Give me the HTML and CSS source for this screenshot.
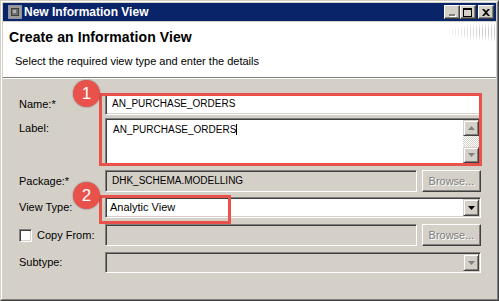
FILE: index.html
```html
<!DOCTYPE html>
<html>

<head>
    <title>New Information View</title>
    <link rel="stylesheet" href="styles.css">
</head>

<body>
    <div class="window">
        <div class="frame">
            <div class="titlebar">
                <svg class="app-icon" width="14" height="14" viewBox="0 0 14 14">
                    <rect x="0.5" y="0.5" width="13" height="13" fill="#9a9a9a" stroke="#c8c8c8" stroke-dasharray="1 1"/>
                    <rect x="3" y="3" width="8" height="8" fill="#404040"/>
                    <rect x="4" y="4" width="6" height="6" fill="#707070"/>
                    <rect x="5" y="5" width="3" height="3" fill="#b0b0b0"/>
                </svg>
                <span class="title">New Information View</span>
                <div class="caption-buttons">
                    <span class="cap-btn"><span class="glyph-min"></span></span>
                    <span class="cap-btn"><span class="glyph-max"></span></span>
                    <span class="cap-btn cap-close">
                        <svg width="8" height="7" viewBox="0 0 8 7">
                            <path d="M0 0h2l2 2 2-2h2L5 3.5 8 7H6L4 5 2 7H0l3-3.5z" fill="#000"/>
                        </svg>
                    </span>
                </div>
            </div>
            <div class="content">
                <div class="header">
                    <h1>Create an Information View</h1>
                    <p>Select the required view type and enter the details</p>
                </div>
                <div class="form">
                    <div class="row">
                        <span class="field-label">Name:*</span>
                        <div class="textbox span-2">AN_PURCHASE_ORDERS</div>
                    </div>
                    <div class="row row-tight">
                        <span class="field-label label-top">Label:</span>
                        <div class="textarea span-2">
                            <div class="textarea-text">AN_PURCHASE_ORDERS<span class="caret"></span></div>
                            <div class="scrollbar">
                                <span class="scroll-btn">
                                    <svg width="7" height="4" viewBox="0 0 7 4"><path d="M3.5 0L7 4H0z" fill="#808080"/></svg>
                                </span>
                                <span class="scroll-track"></span>
                                <span class="scroll-btn">
                                    <svg width="7" height="4" viewBox="0 0 7 4"><path d="M0 0h7L3.5 4z" fill="#808080"/></svg>
                                </span>
                            </div>
                        </div>
                    </div>
                    <div class="row">
                        <span class="field-label">Package:*</span>
                        <div class="textbox disabled">DHK_SCHEMA.MODELLING</div>
                        <span class="button">Browse...</span>
                    </div>
                    <div class="row">
                        <span class="field-label">View Type:</span>
                        <div class="combo span-2">
                            <span class="combo-text">Analytic View</span>
                            <span class="combo-btn">
                                <svg width="7" height="4" viewBox="0 0 7 4"><path d="M0 0h7L3.5 4z" fill="#000"/></svg>
                            </span>
                        </div>
                    </div>
                    <div class="row row-loose">
                        <span class="field-label check-label"><span class="checkbox"></span>Copy From:</span>
                        <div class="textbox disabled"></div>
                        <span class="button">Browse...</span>
                    </div>
                    <div class="row row-loose">
                        <span class="field-label">Subtype:</span>
                        <div class="combo disabled span-2">
                            <span class="combo-text"></span>
                            <span class="combo-btn">
                                <svg width="7" height="4" viewBox="0 0 7 4"><path d="M0 0h7L3.5 4z" fill="#808080"/></svg>
                            </span>
                        </div>
                    </div>
                </div>
            </div>
        </div>

        <div class="callout callout-1"></div>
        <div class="callout callout-2"></div>
        <span class="badge badge-1">1</span>
        <span class="badge badge-2">2</span>
    </div>
</body>

</html>
```

FILE: styles.css
```css
* {
    box-sizing: border-box;
}

body {
    margin: 0;
    font-family: "Liberation Sans", Arial, sans-serif;
    font-size: 11px;
    color: #000;
    background: #d4d0c8;
}

.window {
    position: relative;
    width: 499px;
    height: 301px;
    border: 1px solid;
    border-color: #d4d0c8 #404040 #404040 #d4d0c8;
    background: #d4d0c8;
}

.frame {
    height: 100%;
    border: 1px solid;
    border-color: #fff #808080 #808080 #fff;
    padding: 1px;
    display: flex;
    flex-direction: column;
}

/* title bar */
.titlebar {
    height: 18px;
    flex-shrink: 0;
    background: #0a246a;
    display: flex;
    align-items: center;
    padding: 0 2px 0 5px;
}

.app-icon {
    display: block;
    margin-right: 2px;
}

.title {
    color: #fff;
    font-weight: bold;
    font-size: 12px;
    flex: 1;
}

.caption-buttons {
    display: flex;
}

.cap-btn {
    width: 16px;
    height: 14px;
    background: #d4d0c8;
    border: 1px solid;
    border-color: #fff #404040 #404040 #fff;
    box-shadow: inset -1px -1px #808080;
    display: flex;
    align-items: center;
    justify-content: center;
}

.cap-close {
    margin-left: 2px;
}

.glyph-min {
    width: 6px;
    height: 2px;
    background: #808080;
    box-shadow: 1px 1px #fff;
    margin-top: 6px;
    margin-right: 1px;
}

.glyph-max {
    width: 9px;
    height: 9px;
    border: 1px solid #000;
    border-top-width: 2px;
    margin-right: 1px;
}

.cap-close svg {
    display: block;
    margin-right: 1px;
}

/* content */
.content {
    flex: 1;
    margin-top: 1px;
    display: flex;
    flex-direction: column;
}

.header {
    position: relative;
    height: 56px;
    flex-shrink: 0;
    background: #fff;
    border-bottom: 1px solid #808080;
    padding: 7px 6px 0;
}

.header::after {
    content: "";
    position: absolute;
    right: 0;
    top: 1px;
    width: 84px;
    height: 20px;
    background-image: radial-gradient(circle, #c4c4c4 0.5px, transparent 0.6px);
    background-size: 3px 2px;
    -webkit-mask-image: radial-gradient(ellipse 85% 65% at 100% 45%, #000 25%, transparent 75%);
    mask-image: radial-gradient(ellipse 85% 65% at 100% 45%, #000 25%, transparent 75%);
    opacity: 0.8;
}

.header h1 {
    margin: 0;
    font-size: 14px;
    line-height: 17px;
    font-weight: bold;
    letter-spacing: 0.1px;
}

.header p {
    margin: 9px 0 0 6px;
    line-height: 13px;
}

/* form */
.form {
    border-top: 1px solid #fff;
    padding: 14px 15px 0 16px;
}

.row {
    display: grid;
    grid-template-columns: 81px 1fr 59px;
    column-gap: 5px;
    align-items: center;
    margin-top: 5px;
}

.row:first-child {
    margin-top: 0;
}

.row-tight {
    margin-top: 3px;
}

.row-loose {
    margin-top: 6px;
}

.field-label {
    line-height: 13px;
}

.label-top {
    align-self: start;
    padding-top: 4px;
}

.check-label {
    display: flex;
    align-items: center;
    gap: 5px;
}

.checkbox {
    width: 13px;
    height: 13px;
    background: #fff;
    border: 1px solid;
    border-color: #808080 #fff #fff #808080;
    box-shadow: inset 1px 1px #404040, inset -1px -1px #d4d0c8;
}

.span-2 {
    grid-column: 2 / 4;
}

.textbox {
    height: 22px;
    background: #fff;
    border: 1px solid;
    border-color: #808080 #fff #fff #808080;
    box-shadow: inset 1px 1px #404040, inset -1px -1px #d4d0c8;
    padding: 0 6px;
    font-size: 10px;
    line-height: 20px;
    white-space: nowrap;
}

.textarea {
    height: 47px;
    background: #fff;
    border: 1px solid;
    border-color: #808080 #fff #fff #808080;
    box-shadow: inset 1px 1px #404040, inset -1px -1px #d4d0c8;
    padding: 1px;
    display: flex;
}

.textarea-text {
    flex: 1;
    padding: 3px 6px;
    font-size: 10px;
    line-height: 13px;
}

.caret {
    display: inline-block;
    width: 1px;
    height: 11px;
    background: #000;
    vertical-align: -2px;
}

.scrollbar {
    width: 16px;
    display: flex;
    flex-direction: column;
}

.scroll-btn {
    height: 16px;
    background: #d4d0c8;
    border: 1px solid;
    border-color: #d4d0c8 #404040 #404040 #d4d0c8;
    box-shadow: inset 1px 1px #fff, inset -1px -1px #808080;
    display: flex;
    align-items: center;
    justify-content: center;
}

.scroll-btn svg {
    display: block;
}

.scroll-track {
    flex: 1;
    background: repeating-conic-gradient(#d4d0c8 0 25%, #fff 0 50%) 0 0 / 2px 2px;
}

.combo {
    height: 21px;
    background: #fff;
    border: 1px solid;
    border-color: #808080 #fff #fff #808080;
    box-shadow: inset 1px 1px #404040, inset -1px -1px #d4d0c8;
    padding: 1px;
    display: flex;
}

.combo-text {
    flex: 1;
    padding-left: 3px;
    line-height: 17px;
}

.combo-btn {
    width: 16px;
    background: #d4d0c8;
    border: 1px solid;
    border-color: #d4d0c8 #404040 #404040 #d4d0c8;
    box-shadow: inset 1px 1px #fff, inset -1px -1px #808080;
    display: flex;
    align-items: center;
    justify-content: center;
}

.combo-btn svg {
    display: block;
}

.textbox.disabled,
.combo.disabled {
    background: #d4d0c8;
}

.button {
    height: 22px;
    background: #d4d0c8;
    border: 1px solid;
    border-color: #fff #404040 #404040 #fff;
    box-shadow: inset -1px -1px #808080;
    color: #808080;
    text-shadow: 1px 1px #fff;
    text-align: center;
    line-height: 20px;
}

/* annotations */
.callout {
    position: absolute;
    border: 3px solid #e8524a;
}

.callout-1 {
    left: 98px;
    top: 92px;
    width: 383px;
    height: 73px;
}

.callout-2 {
    left: 98px;
    top: 194px;
    width: 132px;
    height: 29px;
}

.badge {
    position: absolute;
    width: 27px;
    height: 27px;
    border-radius: 50%;
    background: #e8524a;
    box-shadow: 0 0 2px rgba(0, 0, 0, 0.45);
    color: #fff;
    font-size: 17px;
    line-height: 27px;
    text-align: center;
}

.badge-1 {
    left: 72px;
    top: 79px;
}

.badge-2 {
    left: 72px;
    top: 181px;
}
```
